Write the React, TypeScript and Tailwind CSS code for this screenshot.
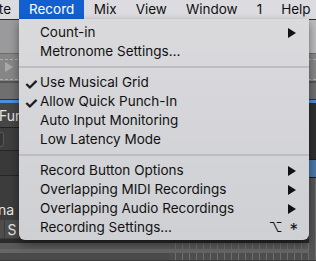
import { ReactNode } from 'react';

type Item = {
	label: string;
	check?: boolean;
	sub?: boolean;
	shortcut?: ReactNode;
};

const groups: Item[][] = [
	[{ label: 'Count-in', sub: true }, { label: 'Metronome Settings…' }],
	[
		{ label: 'Use Musical Grid', check: true },
		{ label: 'Allow Quick Punch-In', check: true },
		{ label: 'Auto Input Monitoring' },
		{ label: 'Low Latency Mode' },
	],
	[
		{ label: 'Record Button Options', sub: true },
		{ label: 'Overlapping MIDI Recordings', sub: true },
		{ label: 'Overlapping Audio Recordings', sub: true },
		{
			label: 'Recording Settings…',
			shortcut: (
				<span className="flex items-center gap-[7px]">
					<span>⌥</span>
					<span className="text-[17px] leading-none pt-[5px]">*</span>
				</span>
			),
		},
	],
];

const grid = {
	backgroundImage:
		'repeating-linear-gradient(90deg, transparent 0 6px, #6e6e6e 6px 7px)',
};

const Arrow = () => (
	<svg width="8" height="10" viewBox="0 0 8 10">
		<path d="M0 0 L8 5 L0 10 Z" fill="#111" />
	</svg>
);

const MenuRow = ({ item }: { item: Item }) => (
	<div className="relative flex h-[19px] items-center pl-[21px] pr-[13px]">
		{item.check && (
			<span className="absolute left-[5px] top-[-1px] text-[16px] font-bold text-[#1a1a1a]">
				✓
			</span>
		)}
		<span className="flex-1 whitespace-nowrap">{item.label}</span>
		{item.sub && <Arrow />}
		{item.shortcut && <span className="mr-[-2px]">{item.shortcut}</span>}
	</div>
);

const App = () => {
	const bar = ['Record', 'Mix', 'View', 'Window', '1', 'Help'];
	return (
		<div
			className="relative h-[261px] w-[316px] overflow-hidden bg-[#3a3a3a]"
			style={{ fontFamily: 'Inter, "Liberation Sans", sans-serif' }}
		>
			{/* menu bar */}
			<div className="flex h-[19px] items-center bg-[#dcdce0] text-[13.5px] text-[#111]">
				<div className="flex w-[19px] shrink-0 justify-end overflow-hidden whitespace-nowrap pr-[8px]">
					<span>te</span>
				</div>
				{bar.map((b, i) => (
					<div
						key={b}
						className={`flex h-full shrink-0 items-center px-[9.5px] ${
							i === 0 ? 'bg-[#135fd0] px-[10px] text-white' : ''
						}`}
					>
						{b}
					</div>
				))}
			</div>

			{/* app behind: top section */}
			<div className="flex flex-col">
				<div className="h-[1px] bg-[#2e2e2e]" />
				<div className="flex h-[33px] justify-between bg-[#9a9a9c]">
					<span />
					<span className="w-[7px] bg-[#bdbdc0]" />
				</div>
				<div className="h-[1px] bg-[#6e6e6e]" />
				<div className="relative h-[27px] bg-[#868686]">
					<div className="mt-[5px] border-t border-dashed border-[#b0b0b0]" />
					<div className="absolute left-[5px] top-[8px] h-0 w-0 border-y-[5px] border-l-[8px] border-y-transparent border-l-[#a8a8a8]" />
					<div className="absolute bottom-[1px] left-0 right-0 border-t border-dashed border-[#b0b0b0]" />
				</div>
				<div className="h-[2px] bg-[#555]" />
				<div className="h-[16px] bg-[#6f6f6f]" />
				<div className="h-[1px] bg-[#333]" />
				<div className="h-[3px] bg-[#4c8fdc]" />
			</div>

			{/* app behind: tracks */}
			<div className="flex h-[157px]">
				<div className="flex w-[19px] flex-col text-[14px] text-[#e6e6e6]">
					<div className="flex h-[24px] items-center bg-[#464646]">
						<span className="ml-[-1px] whitespace-nowrap">Fun</span>
					</div>
					<div className="h-[1px] bg-[#222]" />
					<div className="flex h-[22px] items-center bg-[#3e3e3e]">
						<div className="ml-[-6px] h-[15px] w-[10px] rounded-[3px] border border-[#5a5a5a] bg-[#363636]" />
					</div>
					<div className="h-[1px] bg-[#262626]" />
					<div className="h-[24px] bg-[#393939]" />
					<div className="h-[1px] bg-[#262626]" />
					<div className="h-[24px] bg-[#3c3c3c]" />
					<div className="flex h-[20px] items-center bg-[#3c3c3c] leading-none">
						<span className="ml-[-2px]">na</span>
					</div>
					<div className="flex h-[19px] items-start gap-[1px] bg-[#3c3c3c]">
						<div className="h-[18px] w-[4px] bg-[#4d4d4d]" />
						<div className="flex h-[18px] w-[15px] items-center justify-center bg-[#4d4d4d]">
							S
						</div>
					</div>
					<div className="h-[4px] bg-[#2c2c2c]" />
					<div className="h-[6px] bg-[#5a5a5a]" />
					<div className="h-[4px] bg-[#666]" />
					<div className="flex-1 bg-[#4a4a4a]" />
				</div>
				<div className="flex flex-1 flex-col">
					<div className="h-[136px] bg-[#3a3a3a]" />
					<div className="h-[4px] bg-[#2c2c2c]" />
					<div className="flex h-[6px]">
						<div className="w-[150px] bg-[#5a5a5a]" />
						<div className="flex-1 bg-[#5a5a5a]" style={grid} />
					</div>
					<div className="h-[4px] bg-[#666]" />
					<div className="flex flex-1">
						<div className="w-[150px] bg-[#4a4a4a]" />
						<div className="flex-1 bg-[#4e4e4e]" style={grid} />
					</div>
				</div>
				<div className="flex w-[7px] flex-col">
					<div className="h-[56px] bg-[#2f2f2f]" />
					<div className="h-[1px] bg-[#1e1e1e]" />
					<div className="h-[17px] bg-[#4b78a8]" />
					<div className="h-[1px] bg-[#1e1e1e]" />
					<div className="flex-1 bg-[#555]" style={grid} />
				</div>
			</div>

			{/* dropdown */}
			<div className="absolute left-[19px] top-[19px] w-[290px] rounded-b-[6px] bg-gradient-to-b from-[#dadadd] to-[#cfd0d4] pb-[3px] pt-[4px] text-[13.5px] text-[#111] shadow-[0_4px_10px_rgba(0,0,0,0.45)]">
				{groups.map((g, gi) => (
					<div key={gi}>
						{gi > 0 && (
							<div className="flex h-[12px] items-center">
								<div className="h-[2px] w-full bg-[#bdbdc1]" />
							</div>
						)}
						{g.map((it) => (
							<MenuRow key={it.label} item={it} />
						))}
					</div>
				))}
			</div>
		</div>
	);
};

export default App;
